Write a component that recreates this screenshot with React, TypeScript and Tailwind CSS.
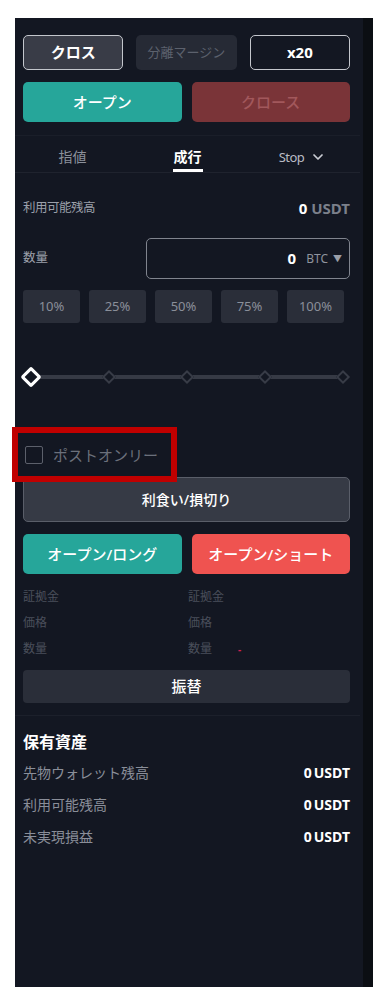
import React from "react";
import { ChevronDown } from "lucide-react";

const font = { fontFamily: '"Noto Sans", "Noto Sans CJK JP", sans-serif' };

function Diamond({ big, pos }: { big?: boolean; pos: string }) {
  return (
    <div
      className={
        "absolute top-1/2 -translate-x-1/2 -translate-y-1/2 " + pos
      }
    >
      {big ? (
        <div className="h-[15px] w-[15px] rotate-45 rounded-[2px] border-[3px] border-white bg-[#131722]" />
      ) : (
        <div className="h-[10px] w-[10px] rotate-45 border-2 border-[#383c47] bg-[#131722]" />
      )}
    </div>
  );
}

export default function App() {
  return (
    <div className="relative min-h-[999px] bg-white" style={font}>
      <div className="ml-[15px] flex h-[969px] w-[358px] translate-y-[18px] bg-[#131722]">
        <div className="flex w-[348px] flex-col">
          <div className="pl-[8px] pr-[13px] pt-[17px]">
            <div className="grid h-[35px] grid-cols-3 gap-[13px]">
              <div className="flex items-center justify-center rounded-[5px] border border-[#c3c6cc] bg-[#393c47] text-[15px] font-bold text-white">
                クロス
              </div>
              <div className="flex items-center justify-center rounded-[5px] bg-[#262a35] text-[13px] text-[#5c616d]">
                分離マージン
              </div>
              <div className="flex items-center justify-center rounded-[5px] border border-[#c3c6cc] bg-[#131722] text-[15px] font-bold text-white">
                x20
              </div>
            </div>
            <div className="mt-[12px] grid h-[40px] grid-cols-2 gap-[10px]">
              <div className="flex items-center justify-center rounded-[5px] bg-[#26a69a] text-[15px] font-medium text-white">
                オープン
              </div>
              <div className="flex items-center justify-center rounded-[5px] bg-[#7a3438] text-[15px] font-medium text-[#a2585c]">
                クロース
              </div>
            </div>
          </div>

          <div className="mr-[3px] mt-[13px] border-t border-[#1a1e29]" />
          <div className="mr-[3px] grid h-[37px] grid-cols-3 border-b border-[#1f232e]">
            <div className="flex flex-col items-center justify-end">
              <span className="text-[14px] leading-[20px] text-[#8b909b]">指値</span>
              <span className="mt-[2px] h-[3px] w-[30px]" />
            </div>
            <div className="flex flex-col items-center justify-end">
              <span className="text-[14px] font-bold leading-[20px] text-white">成行</span>
              <span className="mt-[2px] h-[3px] w-[30px] bg-white" />
            </div>
            <div className="flex flex-col items-center justify-end">
              <span className="flex items-center gap-[6px] text-[13px] leading-[20px] tracking-[-0.5px] text-[#b9bcc4]">
                Stop
                <ChevronDown size={16} strokeWidth={2.6} className="text-[#c9ccd3]" />
              </span>
              <span className="mt-[2px] h-[3px] w-[30px]" />
            </div>
          </div>

          <div className="pl-[8px] pr-[13px]">
            <div className="mt-[17px] flex h-[36px] items-center justify-between">
              <span className="text-[12.5px] tracking-[-0.5px] text-[#9ca0aa]">利用可能残高</span>
              <span className="text-[15px] font-bold">
                <span className="text-white">0</span>{" "}
                <span className="text-[#7b808b]">USDT</span>
              </span>
            </div>

            <div className="mt-[12px] flex h-[41px] items-center justify-between">
              <span className="text-[12.5px] text-[#9ca0aa]">数量</span>
              <div className="flex h-[41px] w-[204px] items-center justify-end rounded-[5px] border border-[#80848e] pr-[7px]">
                <span className="text-[15px] font-bold text-white">0</span>
                <span className="ml-[10px] text-[12px] text-[#8f939d]">BTC</span>
                <span className="ml-[5px] text-[9px] text-[#9a9ea8]">▼</span>
              </div>
            </div>

            <div className="mt-[11px] flex h-[33px] gap-[9px]">
              {["10%", "25%", "50%", "75%", "100%"].map((p) => (
                <div
                  key={p}
                  className="flex w-[57px] items-center justify-center rounded-[3px] bg-[#2a2e39] text-[13px] text-[#8a8f99]"
                >
                  {p}
                </div>
              ))}
            </div>

            <div className="relative ml-[8px] mt-[42px] h-[24px] w-[312px]">
              <div className="absolute left-0 right-0 top-1/2 h-[4px] -translate-y-1/2 bg-[#363a45]" />
              <Diamond pos="left-[25%]" />
              <Diamond pos="left-[50%]" />
              <Diamond pos="left-[75%]" />
              <Diamond pos="left-[100%]" />
              <Diamond big pos="left-0" />
            </div>

            <div className="mt-[54px] flex h-[24px] items-center">
              <div className="ml-[2px] h-[18px] w-[18px] rounded-[2px] border-[1.5px] border-[#5c606b]" />
              <span className="ml-[10px] text-[15px] text-[#6b707b]">ポストオンリー</span>
            </div>

            <div className="mt-[10px] flex h-[45px] items-center justify-center rounded-[5px] border border-[#5a5e69] bg-[#363a45] text-[14px] font-medium text-white">
              利食い/損切り
            </div>

            <div className="mt-[12px] grid h-[40px] grid-cols-2 gap-[10px]">
              <div className="flex items-center justify-center rounded-[5px] bg-[#26a69a] text-[15px] font-medium text-white">
                オープン/ロング
              </div>
              <div className="flex items-center justify-center rounded-[5px] bg-[#ef5350] text-[15px] font-medium text-white">
                オープン/ショート
              </div>
            </div>

            <div className="mt-[10px] flex text-[12px] text-[#4a4f5b]">
              <div className="w-[165px]">
                <div className="flex h-[26px] items-center">証拠金</div>
                <div className="flex h-[26px] items-center">価格</div>
                <div className="flex h-[26px] items-center">数量</div>
              </div>
              <div>
                <div className="flex h-[26px] items-center">証拠金</div>
                <div className="flex h-[26px] items-center">価格</div>
                <div className="flex h-[26px] items-center">
                  数量
                  <span className="ml-[26px] text-[10px] font-bold text-[#d3214f]">-</span>
                </div>
              </div>
            </div>

            <div className="mt-[8px] flex h-[33px] items-center justify-center rounded-[4px] bg-[#2a2e39] text-[15px] font-medium text-white">
              振替
            </div>
          </div>

          <div className="mr-[3px] mt-[12px] border-t border-[#1c202b]" />

          <div className="pl-[8px] pr-[13px]">
            <div className="mt-[12px] flex h-[28px] items-center text-[16px] font-bold text-white">
              保有資産
            </div>
            {["先物ウォレット残高", "利用可能残高", "未実現損益"].map((l) => (
              <div key={l} className="flex h-[32px] items-center justify-between">
                <span className="text-[14px] text-[#8a8e99]">{l}</span>
                <span className="text-[14px] font-bold text-white">
                  0<span className="ml-[2px]">USDT</span>
                </span>
              </div>
            ))}
          </div>
        </div>
        <div className="w-[10px] bg-[#0b0e13]" />
      </div>

      <div className="absolute left-[12px] top-[427px] h-[55px] w-[165px] border-[6px] border-[#c00000]" />
    </div>
  );
}
